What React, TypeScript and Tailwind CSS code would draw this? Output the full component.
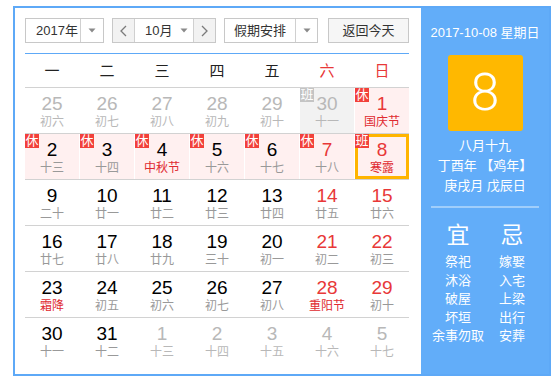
import React from "react";

type Cell = {
  d: string;
  l: string;
  o?: boolean;
  red?: boolean;
  lred?: boolean;
  bg?: "pink" | "gray";
  badge?: "休" | "班";
  badgeGray?: boolean;
  sel?: boolean;
};

const rows: Cell[][] = [
  [
    { d: "25", l: "初六", o: true },
    { d: "26", l: "初七", o: true },
    { d: "27", l: "初八", o: true },
    { d: "28", l: "初九", o: true },
    { d: "29", l: "初十", o: true },
    { d: "30", l: "十一", o: true, bg: "gray", badge: "班", badgeGray: true },
    { d: "1", l: "国庆节", red: true, lred: true, bg: "pink", badge: "休" },
  ],
  [
    { d: "2", l: "十三", bg: "pink", badge: "休" },
    { d: "3", l: "十四", bg: "pink", badge: "休" },
    { d: "4", l: "中秋节", lred: true, bg: "pink", badge: "休" },
    { d: "5", l: "十六", bg: "pink", badge: "休" },
    { d: "6", l: "十七", bg: "pink", badge: "休" },
    { d: "7", l: "十八", red: true, bg: "pink", badge: "休" },
    { d: "8", l: "寒露", red: true, lred: true, bg: "pink", badge: "班", sel: true },
  ],
  [
    { d: "9", l: "二十" },
    { d: "10", l: "廿一" },
    { d: "11", l: "廿二" },
    { d: "12", l: "廿三" },
    { d: "13", l: "廿四" },
    { d: "14", l: "廿五", red: true },
    { d: "15", l: "廿六", red: true },
  ],
  [
    { d: "16", l: "廿七" },
    { d: "17", l: "廿八" },
    { d: "18", l: "廿九" },
    { d: "19", l: "三十" },
    { d: "20", l: "初一" },
    { d: "21", l: "初二", red: true },
    { d: "22", l: "初三", red: true },
  ],
  [
    { d: "23", l: "霜降", lred: true },
    { d: "24", l: "初五" },
    { d: "25", l: "初六" },
    { d: "26", l: "初七" },
    { d: "27", l: "初八" },
    { d: "28", l: "重阳节", red: true, lred: true },
    { d: "29", l: "初十", red: true },
  ],
  [
    { d: "30", l: "十一" },
    { d: "31", l: "十二" },
    { d: "1", l: "十三", o: true },
    { d: "2", l: "十四", o: true },
    { d: "3", l: "十五", o: true },
    { d: "4", l: "十六", o: true },
    { d: "5", l: "十七", o: true },
  ],
];

const Tri = () => (
  <svg width="8" height="5" viewBox="0 0 8 5">
    <polygon points="0.5,0.5 7.5,0.5 4,4.5" fill="#8a8a8a" />
  </svg>
);

const Chev = ({ right }: { right?: boolean }) => (
  <svg width="7" height="12" viewBox="0 0 7 12">
    <polyline
      points={right ? "1,1 6,6 1,11" : "6,1 1,6 6,11"}
      fill="none"
      stroke="#7a7a7a"
      strokeWidth="1.3"
    />
  </svg>
);

function DayCell({ c }: { c: Cell }) {
  const bg =
    c.bg === "pink" ? "bg-[#fff0f0]" : c.bg === "gray" ? "bg-[#f2f2f2]" : "bg-white";
  const numColor = c.o ? "text-[#b8b8b8]" : c.red ? "text-[#e83838]" : "text-black";
  const lunColor = c.o ? "text-[#b8b8b8]" : c.lred ? "text-[#e02a30]" : "text-[#999999]";
  return (
    <div className={`relative h-[45px] w-[54px] ${bg} flex flex-col items-center`}>
      {c.sel && <div className="absolute inset-0 border-[3px] border-[#ffb400]" />}
      {c.badge && (
        <div
          className={`absolute left-0 top-0 z-10 flex h-[14px] w-[14px] items-center justify-center text-[13px] leading-[14px] text-white ${
            c.badgeGray ? "bg-[#c4c4c4]" : "bg-[#f2403a]"
          }`}
        >
          {c.badge}
        </div>
      )}
      <div className={`mt-[6px] text-[19px] leading-[20px] ${numColor}`}>{c.d}</div>
      <div className={`text-[12px] leading-[16px] ${lunColor}`}>{c.l}</div>
    </div>
  );
}

export default function App() {
  const week = ["一", "二", "三", "四", "五", "六", "日"];
  return (
    <div className="font-['Liberation_Sans','Noto_Sans_CJK_SC',sans-serif] pl-[13px] pt-[6px]">
      <div className="flex h-[370px] w-[538px] border-2 border-[#5ea9f7] bg-white">
        {/* left */}
        <div className="w-[406px] pl-[10px] pt-[10px]">
          <div className="flex h-[25px] w-[384px] text-[13px] text-[#333]">
            <div className="flex h-[25px] w-[79px] border border-[#c8c8c8] bg-white">
              <div className="flex w-[54px] items-center pl-[10px]">2017年</div>
              <div className="flex w-[23px] items-center justify-center border-l border-[#d0d0d0]">
                <Tri />
              </div>
            </div>
            <div className="ml-[8px] flex h-[25px] w-[104px] border border-[#c8c8c8] bg-white">
              <div className="flex w-[21px] items-center justify-center bg-[#f2f2f2]">
                <Chev />
              </div>
              <div className="flex w-[60px] items-center border-x border-[#d0d0d0] pl-[10px]">
                <span>10月</span>
                <span className="ml-[8px] flex">
                  <Tri />
                </span>
              </div>
              <div className="flex w-[21px] items-center justify-center bg-[#f2f2f2]">
                <Chev right />
              </div>
            </div>
            <div className="ml-[8px] flex h-[25px] w-[94px] border border-[#c8c8c8] bg-white">
              <div className="flex w-[70px] items-center justify-center">假期安排</div>
              <div className="flex w-[22px] items-center justify-center border-l border-[#d0d0d0]">
                <Tri />
              </div>
            </div>
            <div className="ml-[10px] flex h-[25px] w-[81px] items-center justify-center border border-[#c8c8c8] bg-[#f6f6f6]">
              返回今天
            </div>
          </div>
          <div className="mt-[10px] h-px w-[384px] bg-[#5ea9f7]" />
          <div className="grid h-[34px] w-[384px] grid-cols-7 items-center gap-x-px border-b border-[#d2d2d2]">
            {week.map((w, i) => (
              <div
                key={w}
                className={`text-center text-[15px] leading-[20px] ${
                  i >= 5 ? "text-[#e83838]" : "text-[#222]"
                }`}
              >
                {w}
              </div>
            ))}
          </div>
          {rows.map((r, ri) => (
            <div
              key={ri}
              className={`grid w-[384px] grid-cols-7 gap-x-px ${
                ri < rows.length - 1 ? "border-b border-[#d2d2d2]" : ""
              }`}
            >
              {r.map((c, ci) => (
                <DayCell key={ci} c={c} />
              ))}
            </div>
          ))}
        </div>
        {/* right panel */}
        <div className="flex w-[128px] flex-col items-center bg-[#62adf9] pt-[17px] text-white">
          <div className="text-[13px] leading-[16px]">2017-10-08 星期日</div>
          <div className="mt-[14px] flex h-[76px] w-[75px] items-center justify-center rounded-[3px] bg-[#ffb800] font-['Roboto',sans-serif] text-[52px] font-light leading-none">
            8
          </div>
          <div className="mt-[5px] text-center text-[13px] leading-[20px]">
            <div>八月十九</div>
            <div>丁酉年 【鸡年】</div>
            <div>庚戌月 戊辰日</div>
          </div>
          <div className="mt-[10px] h-[2px] w-[108px] bg-white/40" />
          <div className="mt-[14px] flex w-[108px]">
            <div className="flex w-[54px] flex-col items-center">
              <div className="text-[23px] leading-[26px]">宜</div>
              <div className="mt-[5px] flex flex-col items-center text-[13px] leading-[18.5px]">
                <div>祭祀</div>
                <div>沐浴</div>
                <div>破屋</div>
                <div>坏垣</div>
                <div>余事勿取</div>
              </div>
            </div>
            <div className="flex w-[54px] flex-col items-center">
              <div className="text-[23px] leading-[26px]">忌</div>
              <div className="mt-[5px] flex flex-col items-center text-[13px] leading-[18.5px]">
                <div>嫁娶</div>
                <div>入宅</div>
                <div>上梁</div>
                <div>出行</div>
                <div>安葬</div>
              </div>
            </div>
          </div>
        </div>
      </div>
    </div>
  );
}
